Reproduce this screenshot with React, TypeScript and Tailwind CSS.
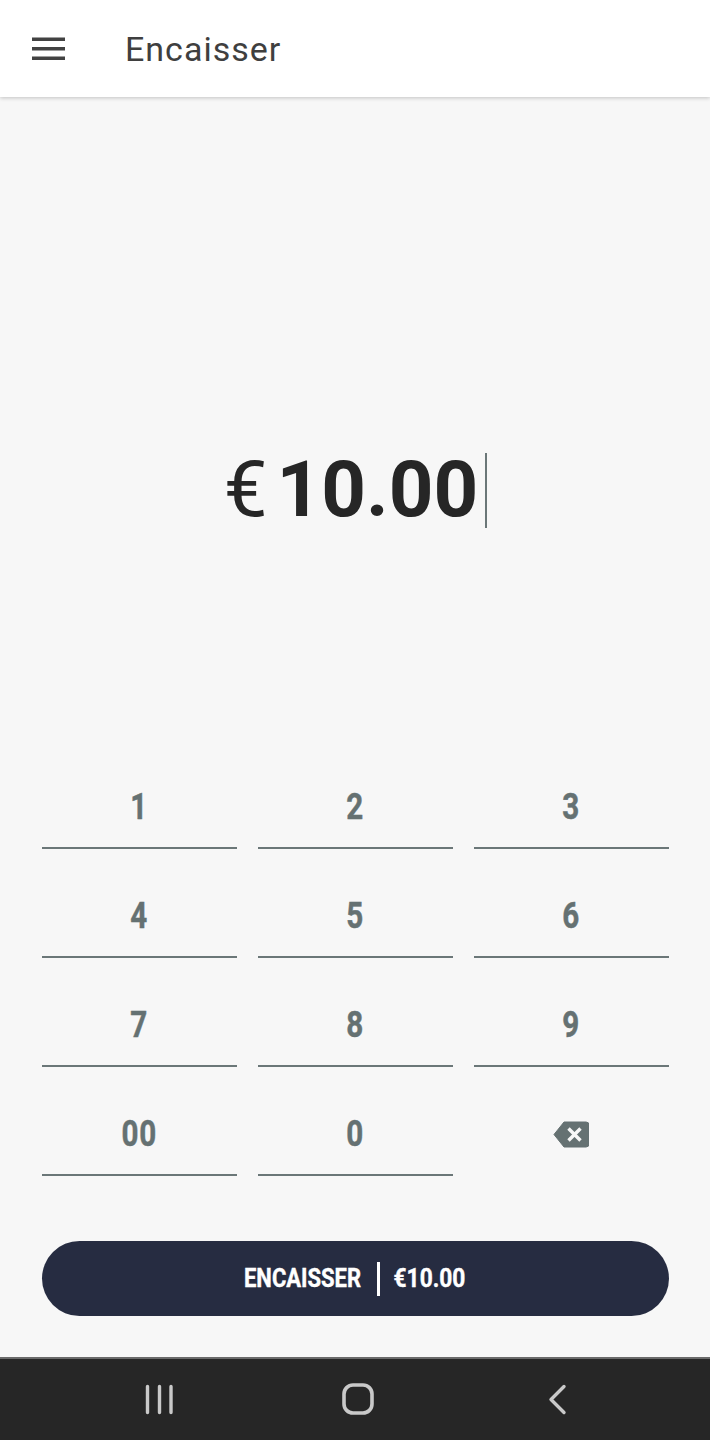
const keys = ["1", "2", "3", "4", "5", "6", "7", "8", "9", "00", "0"];

function Key({ label }: { label: string }) {
  return (
    <div className="h-[109px] flex items-end">
      <div className="w-full h-[72px] border-b-2 border-[#6b7778] flex items-start justify-center pt-[10px]">
        <span className="block text-[37px] leading-[40px] font-bold text-[#657172] scale-x-[0.8] tracking-[1px] [-webkit-text-stroke:0.5px_#657172]">{label}</span>
      </div>
    </div>
  );
}

export default function App() {
  return (
    <div className="w-[710px] h-[1440px] flex flex-col bg-[#f7f7f7] overflow-hidden font-['Roboto',sans-serif]">
      <header className="relative h-[97px] shrink-0 bg-white shadow-[0_1px_4px_rgba(0,0,0,0.22)] flex items-center pl-[32px]">
        <svg width="33" height="24" viewBox="0 0 33 24" className="text-[#424242]">
          <rect x="0" y="0.5" width="33" height="3.5" fill="currentColor" />
          <rect x="0" y="10" width="33" height="3.5" fill="currentColor" />
          <rect x="0" y="19.5" width="33" height="3.5" fill="currentColor" />
        </svg>
        <h1 className="ml-[60px] text-[34px] leading-[40px] text-[#3f3f3f] font-normal tracking-[1px]">Encaisser</h1>
      </header>

      <main className="flex-1 flex flex-col pl-[41.5px] pr-[41.5px]">
        <div className="h-[643px] pt-[355px] flex justify-center items-start shrink-0">
          <div className="flex items-center h-[76px] ml-[1px] text-[#262626]">
            <span className="text-[78px] leading-[76px] font-normal">€</span>
            <span className="ml-[9px] text-[78px] leading-[76px] font-bold">10.00</span>
            <span className="ml-[7px] w-[2px] h-[75px] bg-[#6b7778]" />
          </div>
        </div>

        <div className="grid grid-cols-3 gap-x-[21px]">
          {keys.map((k) => (
            <Key key={k} label={k} />
          ))}
          <div className="h-[109px] flex justify-center pt-[54px]">
            <svg width="36" height="27" viewBox="0 0 36 27">
              <path d="M11 1H33a3 3 0 0 1 3 3V23a3 3 0 0 1-3 3H11L1 13.5Z" fill="#657172" stroke="#657172" strokeLinejoin="round" />
              <path d="M15.5 7.5L27.5 19.5M27.5 7.5L15.5 19.5" stroke="#f7f7f7" strokeWidth="3.4" />
            </svg>
          </div>
        </div>

        <button className="mt-[65px] h-[75px] w-[627px] rounded-full bg-[#262c41] flex items-center justify-center text-white font-bold">
          <span className="w-[117px] flex justify-center">
            <span className="block shrink-0 whitespace-nowrap text-[25px] leading-[30px] scale-x-[0.88] pt-[1px] [-webkit-text-stroke:0.4px_#ffffff]">ENCAISSER</span>
          </span>
          <span className="ml-[15px] mr-[14px] w-[3px] h-[34px] bg-white" />
          <span className="w-[72px] flex justify-center">
            <span className="block shrink-0 whitespace-nowrap text-[25px] leading-[30px] scale-x-[0.91] pt-[1px] [-webkit-text-stroke:0.4px_#ffffff]">€10.00</span>
          </span>
        </button>
      </main>

      <nav className="h-[83px] shrink-0 bg-[#262626] border-t-2 border-[#6a6a6a] flex items-center">
        <div className="relative w-full h-full flex items-center justify-center">
          <svg width="470" height="40" viewBox="0 0 470 40" className="text-[#c9c9c9]">
            <g fill="none" stroke="currentColor" strokeLinecap="round" strokeLinejoin="round" strokeWidth="3.4">
              <path d="M27.5 6.5V32.5M39.5 6.5V32.5M51 6.5V32.5" />
              <rect x="224" y="5" width="28" height="28" rx="9" strokeWidth="3.6" />
              <path d="M444 6.5L431 19.5L444 32.5" />
            </g>
          </svg>
        </div>
      </nav>
    </div>
  );
}
